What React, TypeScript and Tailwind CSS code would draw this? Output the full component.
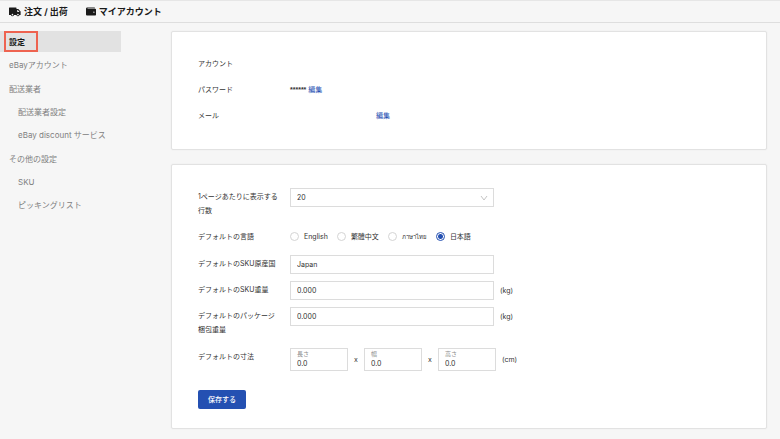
import { useState, type ReactNode } from "react";

const card =
  "rounded-xs border border-[#e2e2e2] bg-white px-[26px] text-[#333333] shadow-[0_0_2px_rgba(0,0,0,0.06)]";
const field =
  "h-[19px] w-[204px] rounded-none border border-[#dcdcdc] bg-white px-[6px] text-[#333333] outline-none";
const labelStyle = "mr-[10px] w-[82px] shrink-0 pt-[2px] leading-[14px]";

function TruckIcon() {
  return (
    <svg viewBox="0 0 24 20" className="h-[10px] w-[12px]" fill="currentColor" aria-hidden="true">
      <path
        d="M1 1h13a1 1 0 0 1 1 1v2h3.6l4.6 5v7H21a3.2 3.2 0 0 1-6.2 0H10a3.2 3.2 0 0 1-6.2 0H0V2a1 1 0 0 1 1-1zM16.5 5.800V10H21l-3.400-4.200zM6.900 13.700a1.600 1.600 0 1 0 0 3.200 1.600 1.600 0 0 0 0-3.200zm11 0a1.600 1.600 0 1 0 0 3.200 1.600 1.600 0 0 0 0-3.200z"
        fillRule="evenodd"
      />
    </svg>
  );
}

function WalletIcon() {
  return (
    <svg viewBox="0 0 20 18" className="h-[9px] w-[10px]" fill="currentColor" aria-hidden="true">
      <path
        d="M2.500 1H17a1 1 0 0 1 1 1v.7H3v1h15.500A1.500 1.500 0 0 1 20 5.200v10.300a1.500 1.500 0 0 1-1.500 1.500H2a2 2 0 0 1-2-2V3.500A2.500 2.500 0 0 1 2.500 1zM15.800 9a1.300 1.300 0 1 0 0 2.600 1.300 1.300 0 0 0 0-2.600z"
        fillRule="evenodd"
      />
    </svg>
  );
}

function NavItem({ children, sub = false }: { children: ReactNode; sub?: boolean }) {
  return (
    <a href="#" className={`flex h-[21px] items-center ${sub ? "pl-[18px]" : "pl-[9px]"}`}>
      {children}
    </a>
  );
}

function InfoRow({ label, children }: { label: string; children?: ReactNode }) {
  return (
    <div className="flex h-[26px] items-center">
      <dt className="w-[92px] shrink-0">{label}</dt>
      <dd className="flex items-center gap-[2px]">{children}</dd>
    </div>
  );
}

function TextRow({ id, label, value, unit }: { id: string; label: string; value: string; unit?: string }) {
  return (
    <div className="flex items-start">
      <label htmlFor={id} className={labelStyle}>
        {label}
      </label>
      <input id={id} type="text" defaultValue={value} className={field} />
      {unit && <span className="ml-[6px] leading-[19px]">{unit}</span>}
    </div>
  );
}

const languages = [
  { name: "English", style: "" },
  { name: "繁體中文", style: "" },
  { name: "ภาษาไทย", style: "text-[6px]" },
  { name: "日本語", style: "" },
];
const dimensions = [
  { id: "length", label: "長さ" },
  { id: "width", label: "幅" },
  { id: "height", label: "高さ" },
];

export default function App() {
  const [language, setLanguage] = useState("日本語");

  return (
    <div className="min-h-screen bg-[#f6f6f6] pb-[10px] font-['Inter','Noto_Sans_CJK_JP',sans-serif] text-[7px] leading-[14px]">
      <header className="border-t border-b border-t-[#e6e6e6] border-b-[#dedede]">
        <nav className="flex h-[21px] items-center gap-[18px] pl-[9px] text-[9px] font-bold text-[#1a1a1a]">
          <a href="#" className="flex items-center gap-[3px]">
            <TruckIcon />
            注文 / 出荷
          </a>
          <a href="#" className="flex items-center gap-[3px]">
            <WalletIcon />
            マイアカウント
          </a>
        </nav>
      </header>

      <div className="flex items-start pt-[8px]">
        <nav className="mr-[50px] flex w-[121px] shrink-0 flex-col gap-[3px] text-[8px] text-[#808080]">
          <div className="flex flex-col gap-[2px]">
            <a
              href="#"
              aria-current="page"
              className="relative flex h-[21px] items-center bg-[#e2e2e2] pl-[9px] font-bold text-[#1a1a1a]"
            >
              設定
              <span className="absolute inset-y-0 left-[4px] w-[34px] border-2 border-[#ee6350]" />
            </a>
            <NavItem>eBayアカウント</NavItem>
          </div>
          <div className="flex flex-col gap-[2px]">
            <NavItem>配送業者</NavItem>
            <NavItem sub>配送業者設定</NavItem>
            <NavItem sub>eBay discount サービス</NavItem>
          </div>
          <div className="flex flex-col gap-[2px]">
            <NavItem>その他の設定</NavItem>
            <NavItem sub>SKU</NavItem>
            <NavItem sub>ピッキングリスト</NavItem>
          </div>
        </nav>

        <main className="mr-[13px] flex min-w-0 flex-1 flex-col gap-[14px]">
          <dl className={`${card} pt-[19px] pb-[20px]`}>
            <InfoRow label="アカウント" />
            <InfoRow label="パスワード">
              <span className="font-['Liberation_Sans',sans-serif] font-bold">******</span>
              <a href="#" className="text-[#2450b2]">
                編集
              </a>
            </InfoRow>
            <InfoRow label="メール">
              <a href="#" className="ml-[86px] text-[#2450b2]">
                編集
              </a>
            </InfoRow>
          </dl>

          <form className={`${card} flex flex-col gap-[7px] pt-[23px] pb-[19px]`} onSubmit={(e) => e.preventDefault()}>
            <div className="flex items-start">
              <label htmlFor="rows" className={labelStyle}>
                1ページあたりに表示する行数
              </label>
              <div className="relative">
                <select id="rows" defaultValue="20" className={`${field} block appearance-none`}>
                  <option>20</option>
                  <option>50</option>
                  <option>100</option>
                </select>
                <svg
                  viewBox="0 0 8 6"
                  className="pointer-events-none absolute top-[7px] right-[6px] h-[6px] w-[8px]"
                  fill="none"
                  stroke="#c4c4c4"
                  aria-hidden="true"
                >
                  <path d="M1 1l3 4 3-4" />
                </svg>
              </div>
            </div>

            <div role="radiogroup" aria-labelledby="language-label" className="flex h-[23px] items-center">
              <span id="language-label" className="w-[92px] shrink-0">
                デフォルトの言語
              </span>
              <div className="flex items-center gap-[9px]">
                {languages.map(({ name, style }) => (
                  <label key={name} className="flex items-center gap-[5px]">
                    <input
                      type="radio"
                      name="language"
                      checked={language === name}
                      onChange={() => setLanguage(name)}
                      className="size-[9px] appearance-none rounded-full border border-[#d4d4d4] bg-white checked:border-[#2450b2] checked:bg-[radial-gradient(circle,#2450b2_2px,#ffffff_3px)]"
                    />
                    <span className={style}>{name}</span>
                  </label>
                ))}
              </div>
            </div>

            <TextRow id="origin" label="デフォルトのSKU原産国" value="Japan" />
            <TextRow id="sku-weight" label="デフォルトのSKU重量" value="0.000" unit="(kg)" />
            <TextRow id="package-weight" label="デフォルトのパッケージ梱包重量" value="0.000" unit="(kg)" />

            <div role="group" aria-labelledby="size-label" className="mt-[4px] flex items-start">
              <span id="size-label" className={labelStyle}>
                デフォルトの寸法
              </span>
              <div className="flex items-center">
                {dimensions.map(({ id, label }, i) => (
                  <div key={id} className="flex items-center">
                    {i > 0 && <span className="w-[16px] text-center">x</span>}
                    <div className="flex h-[23px] w-[58px] flex-col border border-[#dcdcdc] pl-[6px]">
                      <label htmlFor={id} className="text-[6px] leading-[9px] text-[#8c8c8c]">
                        {label}
                      </label>
                      <input
                        id={id}
                        type="text"
                        defaultValue="0.0"
                        className="h-[11px] w-full bg-transparent leading-[11px] outline-none"
                      />
                    </div>
                  </div>
                ))}
                <span className="ml-[6px]">(cm)</span>
              </div>
            </div>

            <button
              type="submit"
              className="mt-[12px] h-[19px] self-start rounded-xs bg-[#2450b2] px-[10px] text-[7px] font-medium text-white"
            >
              保存する
            </button>
          </form>
        </main>
      </div>
    </div>
  );
}
